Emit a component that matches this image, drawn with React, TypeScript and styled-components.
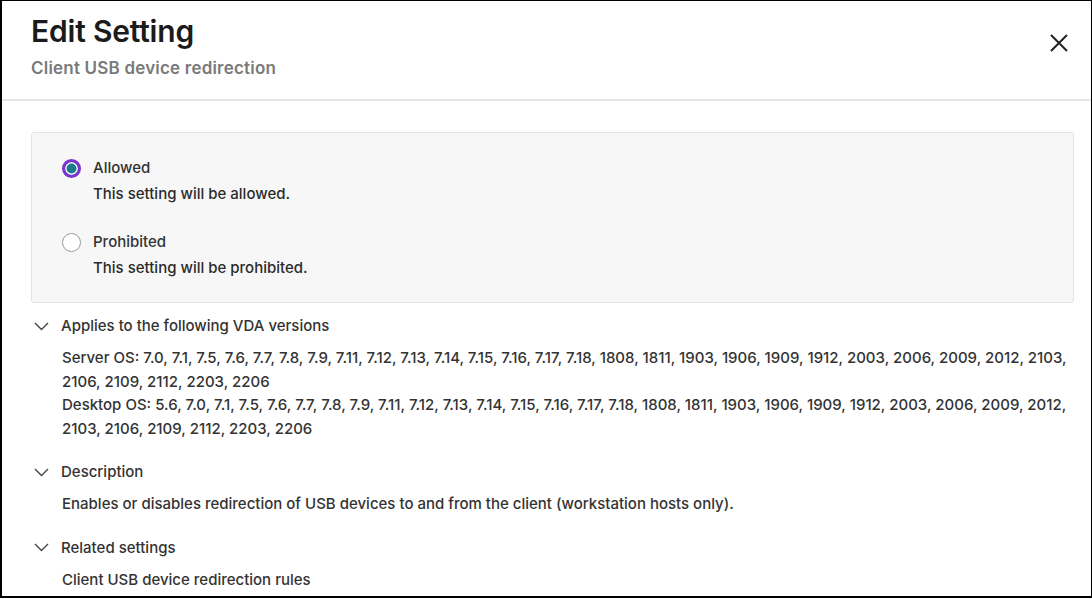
import React from "react";
import styled, { createGlobalStyle } from "styled-components";

const Global = createGlobalStyle`
  html, body { margin: 0; padding: 0; background: #fff; }
  body { font-family: Inter, "Noto Sans", sans-serif; color: #333; }
`;

const Frame = styled.div`
  box-sizing: border-box;
  width: 1092px;
  height: 598px;
  border: 1px solid #000;
  border-left-width: 2px;
  border-bottom-width: 2px;
  overflow: hidden;
  display: flex;
  flex-direction: column;
`;

const Header = styled.header`
  display: flex;
  justify-content: space-between;
  align-items: flex-start;
  padding: 12px 20px 0 29px;
  height: 86px;
  flex-shrink: 0;
  border-bottom: 2px solid #e6e6e6;
`;

const TitleBlock = styled.div`
  display: flex;
  flex-direction: column;
`;

const Title = styled.h1`
  margin: 0;
  font-size: 30px;
  line-height: 36px;
  font-weight: 600;
  color: #1b1b1b;
  letter-spacing: -0.2px;
`;

const Subtitle = styled.div`
  margin-top: 9px;
  font-size: 17px;
  line-height: 20px;
  font-weight: 600;
  color: #7a7a7a;
  letter-spacing: 0.2px;
`;

const CloseButton = styled.button`
  margin-top: 18px;
  width: 24px;
  height: 24px;
  padding: 0;
  border: 0;
  background: transparent;
  display: flex;
  align-items: center;
  justify-content: center;
`;

const Body = styled.main`
  padding: 31px 17px 0 29px;
  display: flex;
  flex-direction: column;
`;

const OptionBox = styled.div`
  background: #f7f7f7;
  border: 1px solid #e3e3e3;
  border-radius: 3px;
  padding: 25px 30px 24px 31px;
  display: flex;
  flex-direction: column;
  gap: 28px;
`;

const Option = styled.label`
  display: grid;
  grid-template-columns: 20px 1fr;
  column-gap: 10px;
  row-gap: 6px;
  align-items: center;
  font-size: 15px;
  line-height: 20px;
`;

const Radio = styled.span<{ $checked?: boolean }>`
  box-sizing: border-box;
  width: 19px;
  height: 19px;
  margin-left: -1px;
  border-radius: 50%;
  background: ${(p) => (p.$checked ? "#1d7a89" : "#fff")};
  border: ${(p) => (p.$checked ? "3px solid #7a34d0" : "1px solid #9a9a9a")};
  box-shadow: ${(p) => (p.$checked ? "inset 0 0 0 1.5px #fff" : "none")};
`;

const OptionLabel = styled.span`
  color: #333;
  font-weight: 500;
`;

const OptionDesc = styled.span`
  grid-column: 2;
  color: #2b2b2b;
  font-weight: 500;
`;

const Section = styled.section`
  margin-top: 13px;
  display: flex;
  flex-direction: column;
  & + & {
    margin-top: 22px;
  }
`;

const SectionHead = styled.div`
  display: flex;
  align-items: center;
  gap: 12px;
  padding-left: 3px;
  font-size: 15px;
  line-height: 20px;
  font-weight: 500;
  color: #333;
`;

const SectionBody = styled.div`
  margin-top: 10px;
  padding-left: 31px;
  font-size: 15px;
  line-height: 23.6px;
  font-weight: 500;
  color: #333;
`;

const Line = styled.div`
  white-space: nowrap;
`;

const Chevron = () => (
  <svg width="15" height="9" viewBox="0 0 15 9" fill="none">
    <path d="M1 1l6.5 6.5L14 1" stroke="#444" strokeWidth="1.4" />
  </svg>
);

export default function App() {
  return (
    <>
      <Global />
      <Frame>
        <Header>
          <TitleBlock>
            <Title>Edit Setting</Title>
            <Subtitle>Client USB device redirection</Subtitle>
          </TitleBlock>
          <CloseButton aria-label="Close">
            <svg width="20" height="20" viewBox="0 0 20 20">
              <path d="M2 2l16 16M18 2L2 18" stroke="#222" strokeWidth="2" />
            </svg>
          </CloseButton>
        </Header>
        <Body>
          <OptionBox>
            <Option>
              <Radio $checked />
              <OptionLabel>Allowed</OptionLabel>
              <OptionDesc>This setting will be allowed.</OptionDesc>
            </Option>
            <Option>
              <Radio />
              <OptionLabel>Prohibited</OptionLabel>
              <OptionDesc>This setting will be prohibited.</OptionDesc>
            </Option>
          </OptionBox>
          <Section>
            <SectionHead>
              <Chevron />
              Applies to the following VDA versions
            </SectionHead>
            <SectionBody>
              <Line>Server OS: 7.0, 7.1, 7.5, 7.6, 7.7, 7.8, 7.9, 7.11, 7.12, 7.13, 7.14, 7.15, 7.16, 7.17, 7.18, 1808, 1811, 1903, 1906, 1909, 1912, 2003, 2006, 2009, 2012, 2103,</Line>
              <Line>2106, 2109, 2112, 2203, 2206</Line>
              <Line>Desktop OS: 5.6, 7.0, 7.1, 7.5, 7.6, 7.7, 7.8, 7.9, 7.11, 7.12, 7.13, 7.14, 7.15, 7.16, 7.17, 7.18, 1808, 1811, 1903, 1906, 1909, 1912, 2003, 2006, 2009, 2012,</Line>
              <Line>2103, 2106, 2109, 2112, 2203, 2206</Line>
            </SectionBody>
          </Section>
          <Section>
            <SectionHead>
              <Chevron />
              Description
            </SectionHead>
            <SectionBody>
              <Line>Enables or disables redirection of USB devices to and from the client (workstation hosts only).</Line>
            </SectionBody>
          </Section>
          <Section>
            <SectionHead>
              <Chevron />
              Related settings
            </SectionHead>
            <SectionBody>
              <Line>Client USB device redirection rules</Line>
            </SectionBody>
          </Section>
        </Body>
      </Frame>
    </>
  );
}
